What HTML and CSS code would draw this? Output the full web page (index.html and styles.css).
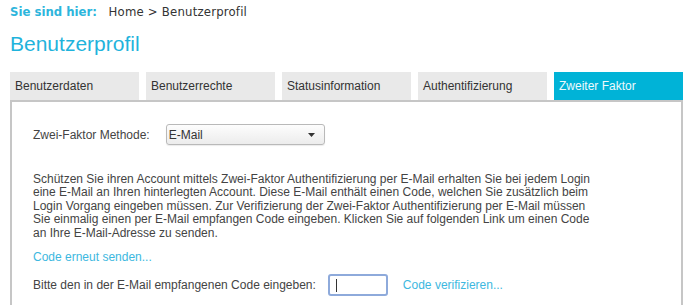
FILE: index.html
```html
<!DOCTYPE html>
<html>
<head>
    <link rel="stylesheet" href="styles.css">
</head>
<body>
<div class="page">
    <div class="breadcrumb">
        <span class="crumb-label">Sie sind hier:</span>
        <span class="crumb-path">Home &gt; Benutzerprofil</span>
    </div>

    <h1 class="page-title">Benutzerprofil</h1>

    <div class="tabs">
        <div class="tab">Benutzerdaten</div>
        <div class="tab">Benutzerrechte</div>
        <div class="tab">Statusinformation</div>
        <div class="tab">Authentifizierung</div>
        <div class="tab active">Zweiter Faktor</div>
    </div>

    <div class="panel">
        <div class="method-row">
            <label class="field-label">Zwei-Faktor Methode:</label>
            <div class="select-wrap">
                <select class="method-select">
                    <option>E-Mail</option>
                </select>
                <svg class="select-arrow" width="7" height="4" viewBox="0 0 7 4">
                    <path d="M0 0 L7 0 L3.5 4 Z" fill="#333"/>
                </svg>
            </div>
        </div>

        <p class="info">
            Schützen Sie ihren Account mittels Zwei-Faktor Authentifizierung per E-Mail erhalten Sie bei jedem Login
            eine E-Mail an Ihren hinterlegten Account. Diese E-Mail enthält einen Code, welchen Sie zusätzlich beim
            Login Vorgang eingeben müssen. Zur Verifizierung der Zwei-Faktor Authentifizierung per E-Mail müssen
            Sie einmalig einen per E-Mail empfangen Code eingeben. Klicken Sie auf folgenden Link um einen Code
            an Ihre E-Mail-Adresse zu senden.
        </p>

        <a class="link resend" href="#">Code erneut senden...</a>

        <div class="verify-row">
            <label class="field-label">Bitte den in der E-Mail empfangenen Code eingeben:</label>
            <span class="code-wrap"><input class="code-input" type="text"></span>
            <a class="link" href="#">Code verifizieren...</a>
        </div>
    </div>
</div>
</body>
</html>
```

FILE: styles.css
```css
body {
    margin: 0;
    font-family: "Liberation Sans", Arial, sans-serif;
    color: #444;
    background: #fff;
}

.page {
    padding: 0 4px 0 10px;
}

.breadcrumb {
    height: 23px;
    line-height: 23px;
    font-family: "DejaVu Sans Condensed", "DejaVu Sans", sans-serif;
    font-stretch: condensed;
    font-size: 13px;
    white-space: nowrap;
}

.crumb-label {
    font-weight: bold;
    color: #2db5dc;
}

.crumb-path {
    margin-left: 8px;
    color: #333;
    letter-spacing: 0.2px;
}

.page-title {
    margin: 9px 0 16px;
    font-size: 21px;
    font-weight: normal;
    line-height: 24px;
    color: #1fb3dc;
}

.tabs {
    display: flex;
    gap: 7px;
    height: 28px;
}

.tab {
    flex: 1;
    background: #e9e9e9;
    padding-left: 5px;
    line-height: 28px;
    font-size: 12px;
    color: #333;
}

.tab.active {
    background: #00b3d7;
    color: #eefafd;
}

.panel {
    border: 2px solid #c6c6c6;
    padding: 22px 21px 0;
    height: 181px;
}

.method-row {
    display: flex;
    align-items: center;
    height: 21px;
}

.field-label {
    font-size: 12px;
    color: #444;
}

.method-row .field-label {
    margin-right: 16px;
}

.select-wrap {
    position: relative;
    width: 159px;
    height: 21px;
}

.method-select {
    appearance: none;
    -webkit-appearance: none;
    width: 100%;
    height: 100%;
    margin: 0;
    padding: 0 0 0 2px;
    border: 1px solid #b9b9b9;
    border-radius: 3px;
    background: linear-gradient(#fdfdfd, #ececec);
    font-family: "Liberation Sans", Arial, sans-serif;
    font-size: 12px;
    color: #333;
    box-shadow: 0 1px 1px rgba(0, 0, 0, 0.08);
}

.select-arrow {
    position: absolute;
    right: 10px;
    top: 9px;
}

.info {
    margin: 28px 0 0;
    width: 562px;
    font-size: 12px;
    line-height: 13.4px;
    color: #444;
}

.link {
    color: #3db8e0;
    text-decoration: none;
    font-size: 12px;
}

.resend {
    display: block;
    margin-top: 11px;
    line-height: 13.4px;
}

.verify-row {
    display: flex;
    align-items: center;
    height: 22px;
    margin-top: 10px;
}

.code-wrap {
    position: relative;
    margin: 0 15px 0 12px;
}

.code-wrap::after {
    content: "";
    position: absolute;
    left: 8px;
    top: 5px;
    width: 1px;
    height: 13px;
    background: #333;
}

.code-input {
    display: block;
    box-sizing: border-box;
    width: 60px;
    height: 22px;
    margin: 0;
    border: 2px solid #8eaadb;
    border-radius: 3px;
    outline: none;
    background: #fff;
}
```
